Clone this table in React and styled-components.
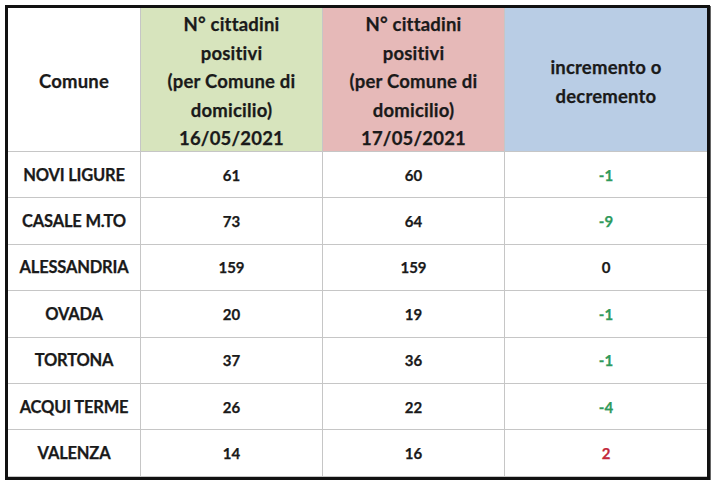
import styled, { createGlobalStyle } from "styled-components"

const GlobalStyle = createGlobalStyle`
  html, body {
    margin: 0;
    background: #ffffff;
  }
  body {
    font-family: Lato, "Noto Sans", sans-serif;
    color: #1a1a1a;
  }
`

const rows = [
  { comune: "NOVI LIGURE", a: 61, b: 60 },
  { comune: "CASALE M.TO", a: 73, b: 64 },
  { comune: "ALESSANDRIA", a: 159, b: 159 },
  { comune: "OVADA", a: 20, b: 19 },
  { comune: "TORTONA", a: 37, b: 36 },
  { comune: "ACQUI TERME", a: 26, b: 22 },
  { comune: "VALENZA", a: 14, b: 16 },
]

const App = () => {
  return (
    <Page>
      <GlobalStyle />
      <Table>
        <HeadCell>Comune</HeadCell>
        <HeadCell $bg="#d7e4bd">
          N° cittadini<br />positivi<br />(per Comune di<br />domicilio)<br />16/05/2021
        </HeadCell>
        <HeadCell $bg="#e6b9b8">
          N° cittadini<br />positivi<br />(per Comune di<br />domicilio)<br />17/05/2021
        </HeadCell>
        <HeadCell $bg="#b9cde5" $last>
          incremento o<br />decremento
        </HeadCell>
        {rows.map((r) => {
          const diff = r.b - r.a
          const tone = diff < 0 ? "#2f9a5c" : diff > 0 ? "#c3283b" : "#1a1a1a"
          return [
            <NameCell key={r.comune + "n"}>{r.comune}</NameCell>,
            <NumCell key={r.comune + "a"}>{r.a}</NumCell>,
            <NumCell key={r.comune + "b"}>{r.b}</NumCell>,
            <NumCell key={r.comune + "d"} $color={tone} $last>
              {diff}
            </NumCell>,
          ]
        })}
      </Table>
    </Page>
  )
}

const Page = styled.div`
  padding: 5px 0 0 5px;
`

const Table = styled.div`
  display: grid;
  grid-template-columns: 133px 182px 182px 202px;
  grid-template-rows: 144px repeat(7, 46.4px);
  width: 699px;
  border: 3px solid #111;
  box-shadow: 1px 1px 0 #666;
`

const Cell = styled.div`
  display: flex;
  align-items: center;
  justify-content: center;
  text-align: center;
  font-weight: 700;
  -webkit-text-stroke: 0.25px currentColor;
  border-right: ${(p) => (p.$last ? "none" : "1px solid #c6c6c6")};
  border-bottom: 1px solid #c6c6c6;
`

const HeadCell = styled(Cell)`
  background: ${(p) => p.$bg || "#ffffff"};
  font-size: 18.5px;
  line-height: 28.5px;
  padding-top: 4px;
  letter-spacing: 0.2px;
`

const NameCell = styled(Cell)`
  font-size: 16.5px;
  letter-spacing: -0.2px;
`

const NumCell = styled(Cell)`
  font-size: 15px;
  color: ${(p) => p.$color || "#1a1a1a"};
`

export default App
